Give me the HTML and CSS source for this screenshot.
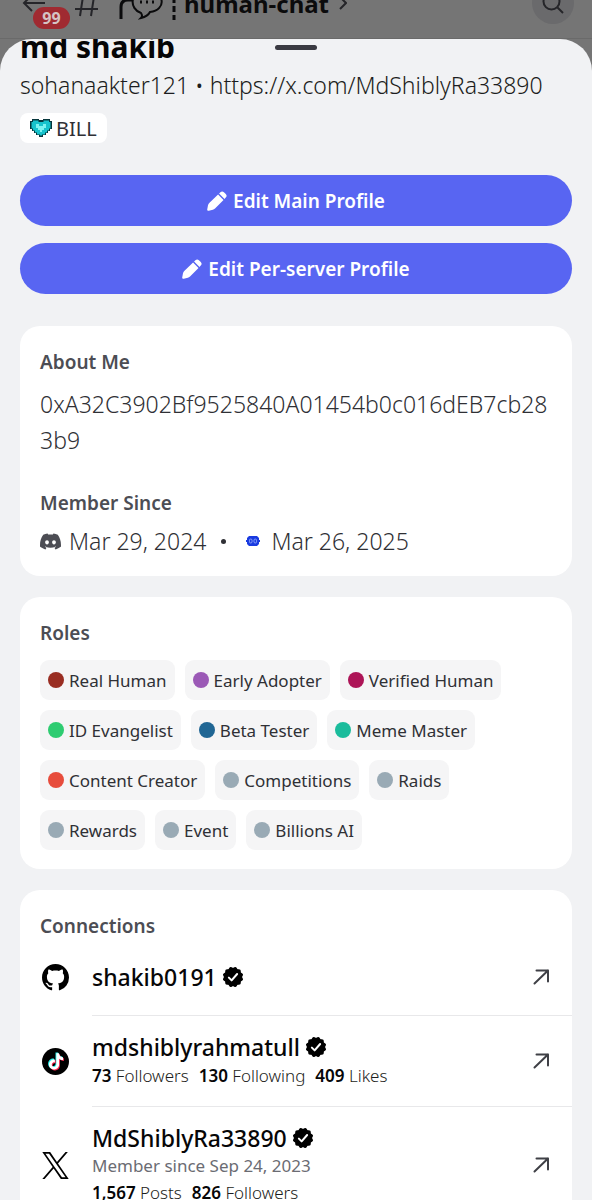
FILE: index.html
```html
<!DOCTYPE html>
<html lang="en">
<head>
    <meta charset="UTF-8">
    <meta name="viewport" content="width=device-width, initial-scale=1.0">
    <title>md shakib</title>
    <link rel="stylesheet" href="styles.css">
</head>
<body>
    <!-- shared icons -->
    <svg class="sprite" aria-hidden="true">
        <symbol id="pencil" viewBox="0 0 24 24">
            <path d="M14.500 3l1.600-1.500a3 3 0 0 1 4.200 0l2.200 2.200a3 3 0 0 1 0 4.200L21 9.500z"/>
            <path d="M13.300 4.200l6.500 6.500L9.600 21c-.7.7-1.600 1.200-2.600 1.500L2.200 23.700a1.500 1.500 0 0 1-1.900-1.900l.9-4.700c.3-1 .8-1.900 1.500-2.600z"/>
        </symbol>
        <symbol id="verified" viewBox="0 0 24 24">
            <rect x="3.500" y="3.500" width="17" height="17" rx="2"/>
            <rect x="3.500" y="3.500" width="17" height="17" rx="2" transform="rotate(30 12 12)"/>
            <rect x="3.500" y="3.500" width="17" height="17" rx="2" transform="rotate(60 12 12)"/>
            <path d="M7.500 12.700l3 3 6-7" fill="none" stroke="#fff" stroke-width="2.200" stroke-linecap="round" stroke-linejoin="round"/>
        </symbol>
        <symbol id="arrow" viewBox="0 0 24 24">
            <path d="M5.500 18.500L19 5.500M7.500 5.500H19V16.500" fill="none" stroke="currentColor" stroke-width="2" stroke-linecap="round" stroke-linejoin="round"/>
        </symbol>
    </svg>

    <header class="topbar">
        <div class="topbar-row">
            <button class="back" aria-label="Back">
                <svg viewBox="0 0 24 24"><path d="M23 12H2M10 4l-8 8 8 8"/></svg>
                <span class="count">99</span>
            </button>
            <svg class="hash" viewBox="0 0 26 28"><path d="M10 1L6 27M21 1l-4 26M2 9h23M1 20h23"/></svg>
            <svg class="bubble" viewBox="0 0 46 34"><path d="M2 33V21q0-7 7-7h4" stroke-width="3"/><path d="M22 27C10 23 10 5 28 5s20 19 3 21c-2 4-5 5-9 6q2-2 0-5z"/><path d="M21 16h2M27 16h2M33 16h2" stroke-width="3"/></svg>
            <svg class="dashes" viewBox="0 0 4 34"><path d="M2 2v32" stroke-dasharray="6 3"/></svg>
            <span class="channel">human-chat</span>
            <svg class="chevron" viewBox="0 0 8 14"><path d="M1 1l6 6-6 6"/></svg>
            <button class="search" aria-label="Search">
                <svg viewBox="0 0 24 24"><circle cx="10.500" cy="10.500" r="8"/><path d="M16.500 16.500L22 22"/></svg>
            </button>
        </div>
    </header>

    <main class="sheet">
        <div class="handle"></div>
        <h1>md shakib</h1>
        <p class="username">sohanaakter121 • https://x.com/MdShiblyRa33890</p>
        <span class="tag">
            <svg viewBox="0 0 22 18">
                <path fill="#07363c" d="M2 0h7v1h4V0h7v2h2v8h-2v2h-2v2h-2v2h-3v2H9v-2H6v-2H4v-2H2v-2H0V2h2z"/>
                <path fill="#17c3cc" d="M3 1.500h5.500v1.500h5V1.500H19V3h1.500v6.500H19v2h-2v2h-2v2h-3v1h-2v-1H7v-2H5v-2H3v-2H1.500V3H3z"/>
                <path fill="#7df3f1" d="M6 5h3v2h4V5h3v4h-2v2h-2v2h-2v-2H8V9H6z"/>
            </svg>
            BILL
        </span>

        <div class="actions">
            <button class="btn"><svg><use href="#pencil"/></svg>Edit Main Profile</button>
            <button class="btn"><svg><use href="#pencil"/></svg>Edit Per-server Profile</button>
        </div>

        <section class="card about">
            <h2>About Me</h2>
            <p class="bio">0xA32C3902Bf9525840A01454b0c016dEB7cb283b9</p>
            <h2>Member Since</h2>
            <p class="since">
                <svg class="discord" viewBox="0 0 24 24"><path d="M20.317 4.3698a19.7913 19.7913 0 00-4.8851-1.5152.0741.0741 0 00-.0785.0371c-.211.3753-.4447.8648-.6083 1.2495-1.8447-.2762-3.68-.2762-5.4868 0-.1636-.3933-.4058-.8742-.6177-1.2495a.077.077 0 00-.0785-.037 19.7363 19.7363 0 00-4.8852 1.515.0699.0699 0 00-.0321.0277C.5334 9.0458-.319 13.5799.0992 18.0578a.0824.0824 0 00.0312.0561c2.0528 1.5076 4.0413 2.4228 5.9929 3.0294a.0777.0777 0 00.0842-.0276c.4616-.6304.8731-1.2952 1.226-1.9942a.076.076 0 00-.0416-.1057c-.6528-.2476-1.2743-.5495-1.8722-.8923a.077.077 0 01-.0076-.1277c.1258-.0943.2517-.1923.3718-.2914a.0743.0743 0 01.0776-.0105c3.9278 1.7933 8.18 1.7933 12.0614 0a.0739.0739 0 01.0785.0095c.1202.099.246.1981.3728.2924a.077.077 0 01-.0066.1276 12.2986 12.2986 0 01-1.873.8914.0766.0766 0 00-.0407.1067c.3604.698.7719 1.3628 1.225 1.9932a.076.076 0 00.0842.0286c1.961-.6067 3.9495-1.5219 6.0023-3.0294a.077.077 0 00.0313-.0552c.5004-5.177-.8382-9.6739-3.5485-13.6604a.061.061 0 00-.0312-.0286zM8.02 15.3312c-1.1825 0-2.1569-1.0857-2.1569-2.419 0-1.3332.9555-2.4189 2.157-2.4189 1.2108 0 2.1757 1.0952 2.1568 2.419 0 1.3332-.9555 2.4189-2.1569 2.4189zm7.9748 0c-1.1825 0-2.1569-1.0857-2.1569-2.419 0-1.3332.9554-2.4189 2.1569-2.4189 1.2108 0 2.1757 1.0952 2.1568 2.419 0 1.3332-.946 2.4189-2.1568 2.4189Z"/></svg>
                <span>Mar 29, 2024</span>
                <span class="dot"></span>
                <svg class="server" viewBox="0 0 14 10"><path fill="#1a3be0" d="M3 0h8l2 2v2h1v2h-1v2l-2 2H3L1 8V6H0V4h1V2z"/><g fill="none" stroke="#9db4ff" stroke-width=".8"><rect x="3.500" y="3" width="2.500" height="4" rx="1.200"/><rect x="8" y="3" width="2.500" height="4" rx="1.200"/></g></svg>
                <span>Mar 26, 2025</span>
            </p>
        </section>

        <section class="card">
            <h2>Roles</h2>
            <ul class="roles">
                <li><i class="red-dark"></i>Real Human</li>
                <li><i class="purple"></i>Early Adopter</li>
                <li><i class="magenta"></i>Verified Human</li>
                <li><i class="green"></i>ID Evangelist</li>
                <li><i class="blue"></i>Beta Tester</li>
                <li><i class="teal"></i>Meme Master</li>
                <li><i class="red"></i>Content Creator</li>
                <li><i></i>Competitions</li>
                <li><i></i>Raids</li>
                <li><i></i>Rewards</li>
                <li><i></i>Event</li>
                <li><i></i>Billions AI</li>
            </ul>
        </section>

        <section class="card connections">
            <h2>Connections</h2>
            <ul>
                <li>
                    <svg class="brand" viewBox="0 0 16 16"><path d="M8 0C3.58 0 0 3.58 0 8c0 3.54 2.29 6.53 5.47 7.59.4.07.55-.17.55-.38 0-.19-.01-.82-.01-1.49-2.01.37-2.53-.49-2.69-.94-.09-.23-.48-.94-.82-1.13-.28-.15-.68-.52-.01-.53.63-.01 1.08.58 1.23.82.72 1.21 1.87.87 2.33.66.07-.52.28-.87.51-1.07-1.78-.2-3.64-.89-3.64-3.95 0-.87.31-1.59.82-2.15-.08-.2-.36-1.02.08-2.12 0 0 .67-.21 2.2.82.64-.18 1.32-.27 2-.27.68 0 1.36.09 2 .27 1.53-1.04 2.2-.82 2.2-.82.44 1.1.16 1.92.08 2.12.51.56.82 1.27.82 2.15 0 3.07-1.87 3.75-3.65 3.95.29.25.54.73.54 1.48 0 1.07-.01 1.93-.01 2.2 0 .21.15.46.55.38A8.013 8.013 0 0016 8c0-4.42-3.58-8-8-8z"/></svg>
                    <a href="#">
                        <div>
                            <h3>shakib0191<svg><use href="#verified"/></svg></h3>
                        </div>
                        <svg class="open"><use href="#arrow"/></svg>
                    </a>
                </li>
                <li>
                    <svg class="brand" viewBox="0 0 48 48">
                        <defs><path id="note" d="M12.525.02c1.31-.02 2.61-.01 3.91-.02.08 1.53.63 3.09 1.75 4.17 1.12 1.11 2.7 1.62 4.24 1.79v4.03c-1.44-.05-2.89-.35-4.2-.97-.57-.26-1.1-.59-1.62-.93-.01 2.92.01 5.84-.02 8.75-.08 1.4-.54 2.79-1.35 3.94-1.31 1.92-3.58 3.17-5.91 3.21-1.43.08-2.86-.31-4.08-1.03-2.02-1.19-3.44-3.37-3.65-5.71-.02-.5-.03-1-.01-1.49.18-1.9 1.12-3.72 2.58-4.96 1.66-1.44 3.98-2.13 6.15-1.72.02 1.48-.04 2.96-.04 4.44-.99-.32-2.15-.23-3.02.37-.63.41-1.11 1.04-1.36 1.75-.21.51-.15 1.07-.14 1.61.24 1.64 1.82 3.02 3.5 2.87 1.12-.01 2.19-.66 2.77-1.61.19-.33.4-.67.41-1.06.1-1.79.06-3.57.07-5.36.01-4.03-.01-8.05.02-12.07z"/></defs>
                        <circle cx="24" cy="24" r="24"/>
                        <use href="#note" fill="#25f4ee" transform="translate(9 8) scale(1.200)"/>
                        <use href="#note" fill="#fe2c55" transform="translate(12 11) scale(1.200)"/>
                        <use href="#note" fill="#fff" transform="translate(10.500 9.500) scale(1.200)"/>
                    </svg>
                    <a href="#">
                        <div>
                            <h3>mdshiblyrahmatull<svg><use href="#verified"/></svg></h3>
                            <p class="stats"><span><b>73</b> Followers</span><span><b>130</b> Following</span><span><b>409</b> Likes</span></p>
                        </div>
                        <svg class="open"><use href="#arrow"/></svg>
                    </a>
                </li>
                <li>
                    <svg class="brand" viewBox="0 0 24 24"><path d="M14.234 10.162 22.977 0h-2.072l-7.591 8.824L7.251 0H.258l9.168 13.343L.258 24H2.330l8.016-9.318L16.749 24h6.993zm-2.837 3.299-.929-1.329L3.076 1.560h3.182l5.965 8.532.929 1.329 7.754 11.090h-3.182z"/></svg>
                    <a href="#">
                        <div>
                            <h3>MdShiblyRa33890<svg><use href="#verified"/></svg></h3>
                            <p class="joined">Member since Sep 24, 2023</p>
                            <p class="stats"><span><b>1,567</b> Posts</span><span><b>826</b> Followers</span></p>
                        </div>
                        <svg class="open"><use href="#arrow"/></svg>
                    </a>
                </li>
            </ul>
        </section>
    </main>
</body>
</html>
```

FILE: styles.css
```css
* {
    box-sizing: border-box;
    margin: 0;
    padding: 0;
}

body {
    font-family: 'Noto Sans', sans-serif;
    background: #757575;
    color: #2f3035;
    height: 100vh;
    overflow: hidden;
    display: flex;
    flex-direction: column;
}

ul {
    list-style: none;
}

button {
    border: none;
    font-family: inherit;
    cursor: pointer;
}

.sprite {
    position: absolute;
    width: 0;
    height: 0;
}

/* Channel bar behind the sheet */
.topbar {
    flex: none;
    height: 39px;
    overflow: hidden;
    display: flex;
    align-items: flex-end;
    border-bottom: 1px solid #6a6a6a;
}

.topbar-row {
    flex: 1;
    height: 70px;
    padding: 0 18px 0 22px;
    display: flex;
    align-items: center;
}

.topbar svg {
    fill: none;
    stroke: #252529;
    stroke-width: 2;
}

.back {
    position: relative;
    width: 24px;
    height: 24px;
    background: none;
}

.back svg {
    width: 24px;
    height: 24px;
}

.count {
    position: absolute;
    top: 16px;
    left: 11px;
    width: 37px;
    height: 22px;
    border-radius: 11px;
    background: #a02a31;
    color: #d5c4c5;
    font-size: 16px;
    font-weight: 700;
    line-height: 22px;
    text-align: center;
}

.hash {
    width: 26px;
    height: 28px;
    margin-left: 28px;
}

.topbar .bubble {
    width: 46px;
    height: 34px;
    margin-left: 19px;
    stroke: #0b0b0c;
}

.topbar .dashes {
    width: 4px;
    height: 34px;
    margin-left: 7px;
    stroke: #0b0b0c;
    stroke-width: 3;
}

.channel {
    margin: 0 10px 0 8px;
    font-size: 24px;
    font-weight: 700;
    color: #0b0b0c;
}

.chevron {
    width: 8px;
    height: 14px;
}

.search {
    width: 42px;
    height: 42px;
    margin-left: auto;
    border-radius: 50%;
    background: #6a6a6c;
    display: flex;
    align-items: center;
    justify-content: center;
}

.search svg {
    width: 24px;
    height: 24px;
}

/* Profile sheet */
.sheet {
    position: relative;
    flex: 1;
    overflow: hidden;
    padding: 0 20px;
    background: #f1f2f4;
    border-radius: 32px 32px 0 0;
}

.handle {
    position: absolute;
    top: 6px;
    left: 50%;
    width: 42px;
    height: 5px;
    margin-left: -21px;
    border-radius: 3px;
    background: #3a3a42;
}

h1 {
    font-size: 30px;
    font-weight: 700;
    line-height: 16px;
    color: #060607;
}

.username {
    margin-top: 12px;
    font-size: 23px;
    font-weight: 300;
    line-height: 36px;
    color: #1c1d20;
}

.tag {
    display: inline-flex;
    align-items: center;
    gap: 4px;
    height: 30px;
    margin-top: 10px;
    padding: 0 10px;
    border-radius: 8px;
    background: #fff;
    font-size: 20px;
}

.tag svg {
    width: 22px;
    height: 18px;
}

.actions {
    display: flex;
    flex-direction: column;
    gap: 17px;
    margin: 32px 0;
}

.btn {
    display: flex;
    align-items: center;
    justify-content: center;
    gap: 6px;
    height: 51px;
    border-radius: 26px;
    background: #5865f2;
    color: #fff;
    font-size: 19px;
    font-weight: 600;
}

.btn svg {
    width: 20px;
    height: 20px;
    fill: #fff;
}

.card {
    margin-bottom: 21px;
    padding: 24px 20px 19px;
    border-radius: 20px;
    background: #fff;
}

h2 {
    font-size: 19px;
    font-weight: 600;
    line-height: 24px;
    color: #4c4d54;
}

.bio {
    margin: 12px 0 33px;
    font-size: 23px;
    font-weight: 300;
    line-height: 36px;
    overflow-wrap: anywhere;
}

.since {
    display: flex;
    align-items: center;
    margin-top: 10px;
    font-size: 23px;
    font-weight: 300;
    line-height: 32px;
}

.discord {
    width: 21px;
    height: 21px;
    margin-right: 8px;
    fill: #4c4d54;
}

.dot {
    width: 5px;
    height: 5px;
    margin: 0 20px 0 15px;
    border-radius: 50%;
    background: #2f3035;
}

.server {
    width: 14px;
    height: 10px;
    margin-right: 11px;
}

.roles {
    display: flex;
    flex-wrap: wrap;
    gap: 10px;
    margin-top: 15px;
}

.roles li {
    display: flex;
    align-items: center;
    gap: 5px;
    height: 40px;
    padding: 0 8px;
    border-radius: 9px;
    background: #f5f5f6;
    font-size: 17px;
}

.roles i {
    width: 16px;
    height: 16px;
    border-radius: 50%;
    background: #99aab5;
}

.roles .red-dark {
    background: #992d22;
}

.roles .purple {
    background: #9b59b6;
}

.roles .magenta {
    background: #ad1457;
}

.roles .green {
    background: #2ecc71;
}

.roles .blue {
    background: #206694;
}

.roles .teal {
    background: #1abc9c;
}

.roles .red {
    background: #e74c3c;
}

/* Connections */
.connections {
    padding-right: 0;
}

.connections li {
    display: flex;
    align-items: center;
    gap: 23px;
}

.brand {
    flex: none;
    width: 27px;
    height: 27px;
    margin-left: 2px;
}

.connections a {
    flex: 1;
    display: flex;
    align-items: center;
    justify-content: space-between;
    min-height: 78px;
    padding: 16px 19px 16px 0;
    border-bottom: 1px solid #e8e8ea;
    color: #1c1d20;
    text-decoration: none;
}

h3 {
    display: flex;
    align-items: center;
    gap: 5px;
    font-size: 23px;
    font-weight: 500;
    line-height: 30px;
    color: #060607;
}

h3 svg {
    width: 22px;
    height: 22px;
}

.stats {
    display: flex;
    gap: 10px;
    font-size: 17px;
    font-weight: 300;
    line-height: 28px;
}

.stats b {
    font-weight: 600;
    color: #060607;
}

.joined {
    font-size: 17px;
    line-height: 26px;
    color: #6b6c73;
}

.open {
    width: 24px;
    height: 24px;
    color: #3f4046;
}
```
